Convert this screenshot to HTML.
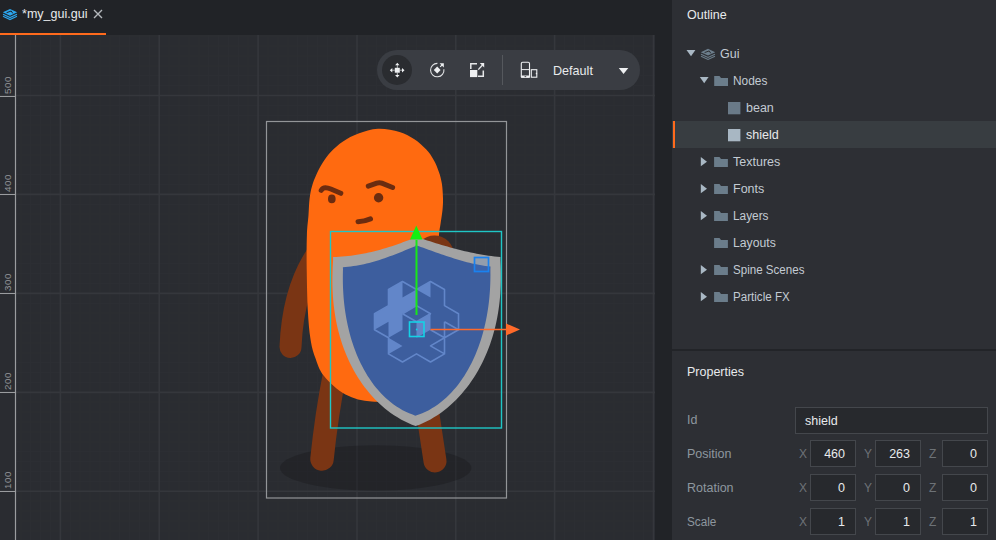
<!DOCTYPE html>
<html><head><meta charset="utf-8">
<style>
*{margin:0;padding:0;box-sizing:border-box}
html,body{width:996px;height:540px;overflow:hidden;background:#222428;font-family:"Liberation Sans",sans-serif;}
.a{position:absolute}
#tabbar{left:0;top:0;width:672px;height:35px;background:#212327}
#tab{left:0;top:33px;width:106px;height:2px;background:#ff6a1c}
#canvas{left:0;top:35px;width:655px;height:505px;background:#2a2c31;overflow:hidden}
#strip{left:655px;top:0;width:17px;height:540px;background:#212327}
#panel{left:672px;top:0;width:324px;height:540px;background:#2d2f34}
#sep{left:672px;top:349px;width:324px;height:2px;background:#222428}
.t{position:absolute;white-space:nowrap;color:#c3cbd3;font-size:12.5px;line-height:1}
.w{color:#e8eaec}
.sel{position:absolute;left:672px;top:121px;width:324px;height:27px;background:#383d41}
.selbar{position:absolute;left:673px;top:121px;width:2px;height:27px;background:#ff6a1c}
.fld{position:absolute;border:1px solid #44474c;background:#27292d;height:27px}
.lbl{color:#8e979f}
.ax{color:#6d7277}
.num{position:absolute;right:10px;top:7px;font-size:12.5px;line-height:1;color:#e8eaec}
</style></head><body>
<div id="tabbar" class="a"></div>
<div id="tab" class="a"></div>
<svg class="a" style="left:0;top:0" width="22" height="24" viewBox="0 0 22 24"><path d="M10 8.9L17.2 12.3L10 15.7L2.8 12.3Z" fill="#2ba6ee"/><path d="M3 14.3L10 17.6L17 14.3M3 16.3L10 19.6L17 16.3" stroke="#2ba6ee" stroke-width="1.15" fill="none"/><path d="M6.6 12.7L11.2 11L12.8 13.4" stroke="#212327" stroke-width="1" fill="none"/></svg>
<div class="t w" style="left:22px;top:7px;font-size:13.5px;transform:scaleX(0.928);transform-origin:0 0">*my_gui.gui</div>
<svg class="a" style="left:93px;top:9px" width="10" height="10" viewBox="0 0 10 10"><path d="M1 1L9 9M9 1L1 9" stroke="#b4b8bc" stroke-width="1.4"/></svg>

<div id="canvas" class="a">
<svg width="655" height="505" viewBox="0 35 655 505" style="position:absolute;left:0;top:0">
<path d="M21.0 35V540M30.5 35V540M40.5 35V540M50.5 35V540M70.5 35V540M80.0 35V540M90.0 35V540M100.0 35V540M110.0 35V540M119.5 35V540M129.5 35V540M139.5 35V540M149.5 35V540M169.0 35V540M179.0 35V540M189.0 35V540M199.0 35V540M208.5 35V540M218.5 35V540M228.5 35V540M238.5 35V540M248.0 35V540M268.0 35V540M278.0 35V540M288.0 35V540M297.5 35V540M307.5 35V540M317.5 35V540M327.5 35V540M337.0 35V540M347.0 35V540M367.0 35V540M376.5 35V540M386.5 35V540M396.5 35V540M406.5 35V540M416.5 35V540M426.0 35V540M436.0 35V540M446.0 35V540M465.5 35V540M475.5 35V540M485.5 35V540M495.5 35V540M505.0 35V540M515.0 35V540M525.0 35V540M535.0 35V540M545.0 35V540M564.5 35V540M574.5 35V540M584.5 35V540M594.0 35V540M604.0 35V540M614.0 35V540M624.0 35V540M633.5 35V540M643.5 35V540M15 36.0H655M15 46.0H655M15 56.0H655M15 66.0H655M15 75.5H655M15 85.5H655M15 105.5H655M15 115.5H655M15 125.0H655M15 135.0H655M15 145.0H655M15 155.0H655M15 165.0H655M15 174.5H655M15 184.5H655M15 204.5H655M15 214.0H655M15 224.0H655M15 234.0H655M15 244.0H655M15 254.0H655M15 263.5H655M15 273.5H655M15 283.5H655M15 303.5H655M15 313.0H655M15 323.0H655M15 333.0H655M15 343.0H655M15 353.0H655M15 362.5H655M15 372.5H655M15 382.5H655M15 402.0H655M15 412.0H655M15 422.0H655M15 432.0H655M15 442.0H655M15 451.5H655M15 461.5H655M15 471.5H655M15 481.5H655M15 501.0H655M15 511.0H655M15 521.0H655M15 531.0H655" stroke="#2c2e33" stroke-width="1"/><path d="M60.4 35V540M159.2 35V540M258.1 35V540M357.0 35V540M455.8 35V540M554.6 35V540M653.5 35V540M0 95.5H655M0 194.4H655M0 293.4H655M0 392.4H655M0 491.3H655" stroke="#35373c" stroke-width="1.6"/><path d="M15.5 35V540" stroke="#9a9c9f" stroke-width="1.2"/><path d="M0 96.5H15" stroke="#9a9c9f" stroke-width="1"/><text transform="translate(11.3 94.1) rotate(-90)" font-family="Liberation Sans" font-size="9.8" letter-spacing="0.6" fill="#939599">500</text><path d="M0 194.5H15" stroke="#9a9c9f" stroke-width="1"/><text transform="translate(11.3 192.1) rotate(-90)" font-family="Liberation Sans" font-size="9.8" letter-spacing="0.6" fill="#939599">400</text><path d="M0 293.5H15" stroke="#9a9c9f" stroke-width="1"/><text transform="translate(11.3 291.1) rotate(-90)" font-family="Liberation Sans" font-size="9.8" letter-spacing="0.6" fill="#939599">300</text><path d="M0 392.5H15" stroke="#9a9c9f" stroke-width="1"/><text transform="translate(11.3 390.1) rotate(-90)" font-family="Liberation Sans" font-size="9.8" letter-spacing="0.6" fill="#939599">200</text><path d="M0 491.5H15" stroke="#9a9c9f" stroke-width="1"/><text transform="translate(11.3 489.1) rotate(-90)" font-family="Liberation Sans" font-size="9.8" letter-spacing="0.6" fill="#939599">100</text>
<ellipse cx="375.7" cy="468" rx="95.7" ry="22.7" fill="rgba(22,22,25,0.33)"/><path d="M335 372 Q326.5 415 322 459" stroke="#7a3514" stroke-width="23.5" stroke-linecap="round" fill="none"/><path d="M425 395 L435 461" stroke="#7a3514" stroke-width="23" stroke-linecap="round"/><path d="M323 246 Q293 284 290.5 347" stroke="#7a3514" stroke-width="22" stroke-linecap="round" fill="none"/><path d="M378.0 128.8C384.9 128.5 393.5 130.2 399.6 131.9C405.7 133.7 409.9 136.4 414.4 139.3C418.8 142.2 423.1 146.2 426.3 149.6C429.5 153.0 431.6 156.3 433.7 160.0C435.8 163.7 437.5 168.0 438.9 171.9C440.3 175.8 441.2 179.3 441.9 183.7C442.6 188.1 442.9 194.1 443.0 198.5C443.1 202.9 442.9 205.8 442.5 210.0C442.1 214.2 441.1 219.8 440.5 224.0C439.9 228.2 439.5 229.0 439.0 235.0C438.5 241.0 437.8 244.2 437.5 260.0C437.2 275.8 439.1 310.0 437.0 330.0C434.9 350.0 431.2 368.7 425.0 380.0C418.8 391.3 408.9 394.4 400.0 398.0C391.1 401.6 380.6 402.1 371.5 401.5C362.4 400.9 353.4 398.8 345.5 394.5C337.6 390.2 329.1 382.2 324.0 376.0C318.9 369.8 317.3 363.2 315.0 357.0C312.7 350.8 311.6 346.3 310.4 338.5C309.2 330.7 308.4 321.6 307.8 310.0C307.2 298.4 306.9 281.5 306.7 269.0C306.5 256.5 306.6 244.0 306.9 235.0C307.2 226.0 308.1 221.1 308.5 215.0C308.9 208.9 309.0 203.3 309.6 198.5C310.2 193.7 310.9 190.0 312.0 186.2C313.1 182.4 314.3 179.3 316.0 175.5C317.7 171.7 319.7 167.5 322.2 163.6C324.7 159.7 327.5 155.5 331.0 151.8C334.5 148.1 338.4 144.5 343.0 141.5C347.6 138.5 352.7 135.7 358.5 133.6C364.3 131.5 371.1 129.1 378.0 128.8Z" fill="#ff6a10"/><circle cx="434.5" cy="255" r="19.5" fill="#7a3514"/><path d="M321.2 190.4 C322.8 187.3 326.8 187.3 330.8 189 L340.8 193.3" stroke="#6b2c10" stroke-width="5" stroke-linecap="round" fill="none"/><path d="M368.3 186.1 L376.8 183.2 Q379.3 182.3 381.8 183.2 L392.6 187.5" stroke="#6b2c10" stroke-width="5" stroke-linecap="round" fill="none"/><ellipse cx="331.8" cy="198.9" rx="3.8" ry="4.3" fill="#6b2c10"/><circle cx="378.6" cy="197.7" r="4.7" fill="#6b2c10"/><path d="M358 221.7 Q364 221.6 370.5 218.9" stroke="#6b2c10" stroke-width="5" stroke-linecap="round" fill="none"/><path d="M415.74 236.69L418.60 237.64L421.46 238.58L424.32 239.52L427.19 240.45L430.07 241.37L432.95 242.28L435.83 243.17L438.71 244.05L441.61 244.92L444.50 245.77L447.40 246.61L450.30 247.42L453.21 248.22L456.13 248.99L459.04 249.74L461.97 250.46L464.89 251.16L467.83 251.83L470.76 252.48L473.71 253.09L476.65 253.67L479.61 254.22L482.57 254.73L485.53 255.21L488.50 255.66L491.47 256.06L494.45 256.42L497.44 256.75L500.43 257.03L500.40 260.15L500.60 264.26L500.75 268.36L500.84 272.46L500.87 276.54L500.84 280.63L500.74 284.70L500.57 288.77L500.34 292.84L500.03 296.89L499.65 300.94L499.19 304.97L498.65 309.00L498.03 313.01L497.33 317.01L496.55 321.00L495.68 324.96L494.72 328.91L493.67 332.84L492.54 336.74L491.31 340.62L490.00 344.47L488.59 348.30L487.09 352.08L485.49 355.83L483.80 359.54L482.02 363.21L480.14 366.84L478.17 370.41L476.10 373.93L473.93 377.39L471.68 380.79L469.32 384.13L466.87 387.39L464.33 390.59L461.70 393.70L458.97 396.73L456.15 399.67L453.24 402.52L450.24 405.27L447.16 407.92L443.98 410.46L440.72 412.88L437.38 415.18L433.95 417.36L430.44 419.40L426.85 421.30L423.18 423.06L419.44 424.67L415.63 426.12L411.96 424.67L408.22 423.06L404.55 421.30L400.96 419.40L397.45 417.36L394.02 415.18L390.68 412.88L387.42 410.46L384.27 407.92L381.22 405.27L378.26 402.52L375.39 399.67L372.61 396.73L369.93 393.70L367.34 390.59L364.84 387.39L362.44 384.13L360.13 380.79L357.92 377.39L355.81 373.93L353.79 370.41L351.86 366.84L350.04 363.21L348.30 359.54L346.67 355.83L345.12 352.08L343.67 348.30L342.32 344.47L341.06 340.62L339.89 336.74L338.81 332.84L337.82 328.91L336.91 324.96L336.10 321.00L335.37 317.01L334.73 313.01L334.16 309.00L333.68 304.97L333.28 300.94L332.95 296.89L332.70 292.84L332.52 288.77L332.41 284.70L332.37 280.63L332.40 276.54L332.49 272.46L332.63 268.36L332.84 264.26L333.10 260.15L333.07 257.10L336.06 256.98L339.05 256.82L342.03 256.61L345.00 256.35L347.97 256.05L350.93 255.70L353.89 255.30L356.85 254.86L359.79 254.37L362.74 253.83L365.67 253.25L368.61 252.62L371.53 251.95L374.46 251.24L377.37 250.48L380.29 249.69L383.20 248.85L386.10 247.98L389.00 247.08L391.89 246.14L394.79 245.17L397.67 244.18L400.55 243.16L403.43 242.12L406.31 241.06L409.18 239.98L412.04 238.90L414.90 237.80Z" fill="#a3a3a3"/><path d="M415.75 245.19L418.28 246.07L420.81 246.96L423.34 247.86L425.88 248.77L428.41 249.67L430.95 250.58L433.50 251.49L436.04 252.39L438.59 253.29L441.15 254.18L443.70 255.06L446.27 255.92L448.83 256.77L451.40 257.61L453.97 258.42L456.55 259.22L459.13 259.98L461.72 260.73L464.31 261.44L466.90 262.13L469.50 262.78L472.11 263.40L474.72 263.98L477.33 264.52L479.96 265.02L482.58 265.47L485.21 265.88L487.85 266.25L490.50 266.56L490.38 269.60L490.42 273.19L490.42 276.78L490.36 280.36L490.26 283.93L490.10 287.49L489.89 291.06L489.63 294.61L489.31 298.16L488.93 301.71L488.50 305.25L488.01 308.79L487.45 312.31L486.84 315.84L486.17 319.35L485.43 322.85L484.63 326.34L483.77 329.82L482.84 333.29L481.84 336.73L480.78 340.16L479.64 343.57L478.44 346.96L477.16 350.32L475.81 353.65L474.39 356.95L472.89 360.21L471.32 363.44L469.67 366.62L467.94 369.76L466.13 372.85L464.24 375.89L462.28 378.87L460.22 381.79L458.09 384.64L455.87 387.42L453.57 390.12L451.17 392.75L448.69 395.28L446.13 397.73L443.47 400.08L440.72 402.32L437.88 404.45L434.94 406.47L431.91 408.37L428.79 410.14L425.56 411.78L422.25 413.27L418.83 414.61L415.31 415.80L412.57 414.61L409.15 413.27L405.84 411.78L402.61 410.14L399.51 408.37L396.51 406.47L393.60 404.45L390.79 402.32L388.07 400.08L385.45 397.73L382.91 395.28L380.47 392.75L378.11 390.12L375.85 387.42L373.67 384.64L371.57 381.79L369.56 378.87L367.63 375.89L365.79 372.85L364.02 369.76L362.34 366.62L360.74 363.44L359.21 360.21L357.76 356.95L356.38 353.65L355.08 350.32L353.85 346.96L352.69 343.57L351.60 340.16L350.58 336.73L349.63 333.29L348.75 329.82L347.94 326.34L347.19 322.85L346.50 319.35L345.88 315.84L345.31 312.31L344.81 308.79L344.37 305.25L343.99 301.71L343.66 298.16L343.39 294.61L343.18 291.06L343.01 287.49L342.91 283.93L342.85 280.36L342.85 276.78L342.89 273.19L342.98 269.60L342.91 267.15L345.56 266.97L348.20 266.73L350.84 266.44L353.47 266.09L356.10 265.69L358.73 265.23L361.34 264.72L363.96 264.17L366.57 263.56L369.17 262.91L371.77 262.22L374.37 261.48L376.95 260.71L379.53 259.90L382.10 259.05L384.67 258.18L387.23 257.27L389.80 256.34L392.35 255.38L394.91 254.40L397.46 253.41L400.00 252.40L402.55 251.38L405.09 250.35L407.62 249.31L410.16 248.27L412.69 247.24L415.22 246.21Z" fill="#3d5e9e"/>
<path d="M388.5 289.5L402.5 281.5L402.5 297.6L416.5 289.5L416.5 305.6L402.5 313.7L402.5 329.8L388.5 337.8L388.5 321.7L374.5 329.8L374.5 313.7L388.5 305.6ZM388.5 337.8L402.5 345.9L388.5 353.9ZM416.5 321.7L430.5 313.7L430.5 329.8L416.5 337.8ZM416.5 289.5L430.5 281.5L430.5 297.6Z" fill="#6286c9"/><path d="M402.5 281.5L416.5 289.5L430.5 281.5L444.5 289.5L444.5 305.6L458.5 313.7L458.5 329.8L444.5 337.8L444.5 353.9L430.5 362L416.5 353.9L402.5 362L388.5 353.9L388.5 337.8L374.5 329.8L374.5 313.7L388.5 305.6L388.5 289.5ZM402.5 313.7L416.5 305.6L430.5 313.7L416.5 321.7L402.5 313.7M444.5 321.7L458.5 329.8M458.5 329.8L444.5 337.8L430.5 345.9L444.5 353.9M430.5 329.8L444.5 337.8M444.5 321.7L444.5 353.9" fill="none" stroke="#6286c9" stroke-width="1.6" stroke-linejoin="round"/>
<rect x="266.5" y="121.5" width="240" height="376.5" fill="none" stroke="#939598" stroke-width="1.2"/><rect x="330.5" y="231.5" width="171" height="196.5" fill="none" stroke="#1fc6c6" stroke-width="1.4"/><rect x="474.5" y="257.5" width="14" height="14" fill="rgba(60,130,230,0.16)" stroke="#1a82f0" stroke-width="1.7"/><path d="M416.5 240V315" stroke="#18e818" stroke-width="2"/><path d="M416.3 225.5L422.5 239.5H410Z" fill="#12f012"/><path d="M430.5 329.5H507" stroke="#ff6a2a" stroke-width="1.3"/><path d="M520 329.5L506 323.5V335.5Z" fill="#ff6a2a"/><rect x="409.5" y="322" width="14.5" height="14.5" fill="none" stroke="#14d2e6" stroke-width="1.6"/><circle cx="416.7" cy="329.5" r="0.9" fill="#14d2e6"/>
</svg>
<!-- toolbar -->
<div class="a" style="left:377px;top:15px;width:263px;height:40px;border-radius:20px;background:#3a3d43"></div>
<div class="a" style="left:382px;top:19.5px;width:30px;height:30px;border-radius:15px;background:#2a2c30"></div>
<div class="a" style="left:502px;top:20px;width:1px;height:30px;background:#55585d"></div>
</div>
<svg class="a" style="left:377px;top:50px" width="263" height="40" viewBox="377 50 263 40">
<g fill="#eef0f2" stroke="none">
<rect x="394.8" y="67.8" width="5" height="4.9"/>
<path d="M397.3 62.8L399.5 65.3H395.1Z M397.3 77.4L399.5 74.9H395.1Z M389.8 70.2L392.3 68V72.4Z M404.5 70.2L402 68V72.4Z"/>
</g>
<path d="M397.3 65V68M397.3 72.4V75M392 70.2H394.8M399.8 70.2H402" stroke="#d8dadc" stroke-width="0.8"/>
<path d="M437.4 63.4 A6.7 6.7 0 1 0 443.9 69.2" stroke="#e0e2e4" stroke-width="1.1" fill="none"/><path d="M440.2 66.8L442.6 64.4" stroke="#eef0f2" stroke-width="1.2"/>
<path d="M437.2 66.6L440.6 70L437.2 73.4L433.8 70Z" fill="#eef0f2"/>
<path d="M439.6 63.2H443.8V67.4Z" fill="#eef0f2"/>
<rect x="470" y="70" width="7.3" height="7.1" fill="#eef0f2"/>
<path d="M470.8 69V63.8H477 M483.3 70.5V76.3H478" stroke="#e6e8ea" stroke-width="1.5" fill="none"/>
<path d="M478.3 69.6L482.5 65" stroke="#e6e8ea" stroke-width="1.4"/>
<path d="M479.8 63H484.2V67.4Z" fill="#eef0f2"/>
<rect x="521.3" y="62.2" width="8.2" height="15" rx="1.3" stroke="#eef0f2" stroke-width="1.1" fill="none"/>
<path d="M521.3 69.6H529.5" stroke="#eef0f2" stroke-width="1"/>
<rect x="520.8" y="75.6" width="9.2" height="2.1" rx="0.6" fill="#eef0f2"/>
<rect x="524.6" y="76.2" width="1.6" height="0.9" fill="#3a3d43"/>
<rect x="531.3" y="69.7" width="5.5" height="7.5" stroke="#eef0f2" stroke-width="1.1" fill="none"/>
<rect x="535.8" y="72.8" width="1.3" height="1.4" fill="#eef0f2"/>
<path d="M618.8 67.9H628.3L623.55 73.9Z" fill="#eef0f2"/>
</svg>
<div class="t w" style="left:553px;top:64.5px;font-size:12.6px">Default</div>
<div id="strip" class="a"></div>
<div id="panel" class="a"></div>
<div id="sep" class="a"></div>
<div class="t w" style="left:687px;top:9px">Outline</div>

<div class="sel"></div><div class="selbar"></div>
<svg class="a" style="left:672px;top:40px" width="160" height="270" viewBox="672 40 160 270">
<g fill="#a9b8c4">
<path d="M686.5 50H695.4L691 56.3Z"/>
<path d="M699.8 77H708.6L704.2 83.3Z"/>
<path d="M700.8 157L707 161.65L700.8 166.3Z"/>
<path d="M700.8 184L707 188.65L700.8 193.3Z"/>
<path d="M700.8 211L707 215.65L700.8 220.3Z"/>
<path d="M700.8 265L707 269.65L700.8 274.3Z"/>
<path d="M700.8 292L707 296.65L700.8 301.3Z"/>
</g>
<g fill="#6c7e8c">
<path d="M708 48.8L715.2 52.2L708 55.6L700.8 52.2Z"/>
<path d="M701 54.2L708 57.5L715 54.2" stroke="#6c7e8c" stroke-width="1.1" fill="none"/>
<path d="M701 56.2L708 59.5L715 56.2" stroke="#6c7e8c" stroke-width="1.1" fill="none"/>
</g>
<path d="M704.6 52.6L709.2 50.9L710.8 53.3" stroke="#2d2f34" stroke-width="1" fill="none"/>
<g fill="#6b7d8b">
<path d="M714.2 76H719.5L721 78H728V86H714.2Z"/>
<path d="M714.1 157H719.5L721 159H727.9V167.1H714.1Z"/>
<path d="M714.1 184H719.5L721 186H727.9V194.1H714.1Z"/>
<path d="M714.1 211H719.5L721 213H727.9V221.1H714.1Z"/>
<path d="M714.1 238H719.5L721 240H727.9V248.1H714.1Z"/>
<path d="M714.1 265H719.5L721 267H727.9V275.1H714.1Z"/>
<path d="M714.1 292H719.5L721 294H727.9V302.1H714.1Z"/>
</g>
<rect x="728" y="102" width="12.4" height="12.3" fill="#6a7a88"/>
<rect x="728" y="129" width="12.4" height="12.3" fill="#a8b7c3"/>
</svg>
<div class="t" style="left:720px;top:48px">Gui</div>
<div class="t" style="left:733px;top:75px;transform:scaleX(0.95);transform-origin:0 0">Nodes</div>
<div class="t" style="left:746px;top:102px">bean</div>
<div class="t w" style="left:746px;top:129px">shield</div>
<div class="t" style="left:733px;top:156px">Textures</div>
<div class="t" style="left:733px;top:183px">Fonts</div>
<div class="t" style="left:733px;top:210px;transform:scaleX(0.946);transform-origin:0 0">Layers</div>
<div class="t" style="left:733px;top:237px;transform:scaleX(0.977);transform-origin:0 0">Layouts</div>
<div class="t" style="left:733px;top:264px;transform:scaleX(0.926);transform-origin:0 0">Spine Scenes</div>
<div class="t" style="left:733px;top:291px;transform:scaleX(0.928);transform-origin:0 0">Particle FX</div>

<div class="t w" style="left:687px;top:366px">Properties</div>
<div class="t lbl" style="left:687px;top:414px">Id</div>
<div class="t lbl" style="left:687px;top:448px">Position</div>
<div class="t lbl" style="left:687px;top:482px">Rotation</div>
<div class="t lbl" style="left:687px;top:516px;transform:scaleX(0.94);transform-origin:0 0">Scale</div>
<div class="fld" style="left:795px;top:407px;width:193px"><div class="t w" style="left:9px;top:7px">shield</div></div>
<div class="t ax" style="left:799px;top:448px;font-size:12px">X</div><div class="fld" style="left:810px;top:440px;width:46px"><div class="num">460</div></div><div class="t ax" style="left:864px;top:448px;font-size:12px">Y</div><div class="fld" style="left:875px;top:440px;width:46px"><div class="num">263</div></div><div class="t ax" style="left:929px;top:448px;font-size:12px">Z</div><div class="fld" style="left:942px;top:440px;width:46px"><div class="num">0</div></div><div class="t ax" style="left:799px;top:482px;font-size:12px">X</div><div class="fld" style="left:810px;top:474px;width:46px"><div class="num">0</div></div><div class="t ax" style="left:864px;top:482px;font-size:12px">Y</div><div class="fld" style="left:875px;top:474px;width:46px"><div class="num">0</div></div><div class="t ax" style="left:929px;top:482px;font-size:12px">Z</div><div class="fld" style="left:942px;top:474px;width:46px"><div class="num">0</div></div><div class="t ax" style="left:799px;top:516px;font-size:12px">X</div><div class="fld" style="left:810px;top:508px;width:46px"><div class="num">1</div></div><div class="t ax" style="left:864px;top:516px;font-size:12px">Y</div><div class="fld" style="left:875px;top:508px;width:46px"><div class="num">1</div></div><div class="t ax" style="left:929px;top:516px;font-size:12px">Z</div><div class="fld" style="left:942px;top:508px;width:46px"><div class="num">1</div></div>
</body></html>
